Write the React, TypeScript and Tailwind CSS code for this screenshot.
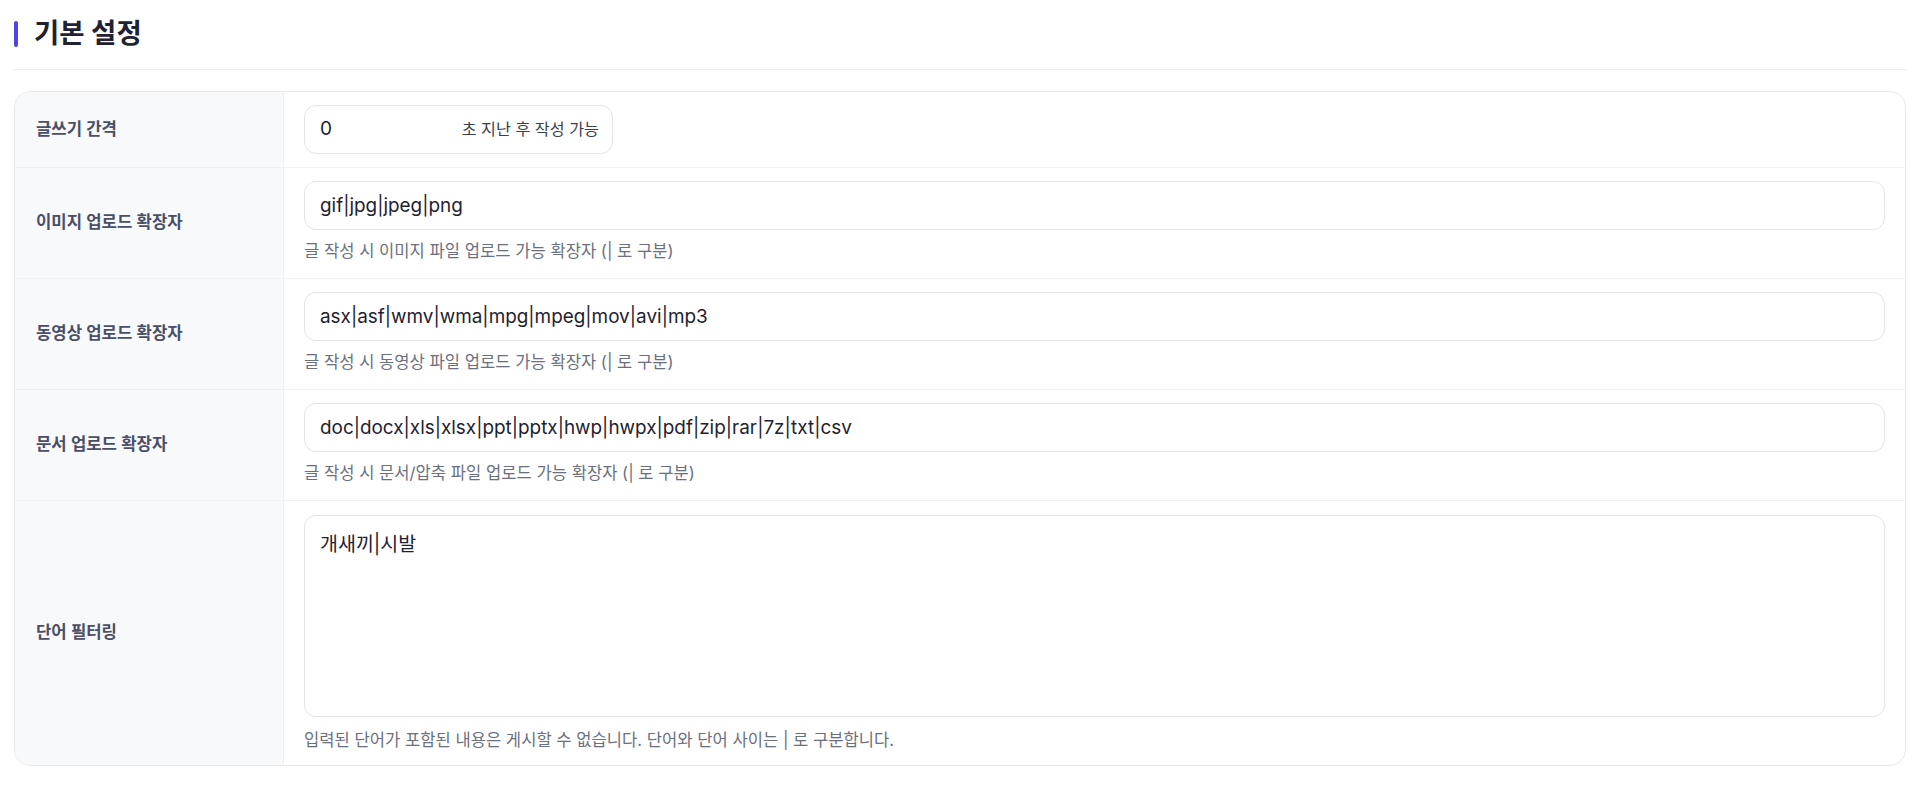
import { useState } from "react";

const font = { fontFamily: '"Inter", "Noto Sans CJK KR", sans-serif' };

const extRows = [
  {
    label: "이미지 업로드 확장자",
    value: "gif|jpg|jpeg|png",
    help: "글 작성 시 이미지 파일 업로드 가능 확장자 (| 로 구분)",
  },
  {
    label: "동영상 업로드 확장자",
    value: "asx|asf|wmv|wma|mpg|mpeg|mov|avi|mp3",
    help: "글 작성 시 동영상 파일 업로드 가능 확장자 (| 로 구분)",
  },
  {
    label: "문서 업로드 확장자",
    value: "doc|docx|xls|xlsx|ppt|pptx|hwp|hwpx|pdf|zip|rar|7z|txt|csv",
    help: "글 작성 시 문서/압축 파일 업로드 가능 확장자 (| 로 구분)",
  },
];

const Label = ({ children }: { children: React.ReactNode }) => (
  <div className="w-[269px] shrink-0 flex items-center pl-[21px] bg-[#f8f9fb] border-r border-[#f0f1f4] text-[16.7px] font-semibold text-[#4a4e66]">
    {children}
  </div>
);

export default function App() {
  const [interval, setInterval] = useState("0");
  const [exts, setExts] = useState(extRows.map((r) => r.value));
  const [words, setWords] = useState("개새끼|시발");

  return (
    <div className="min-h-screen bg-white px-[14px]" style={font}>
      {/* Header */}
      <div className="flex items-center gap-[16px] pt-[15px] pb-[17px] border-b border-[#eceef1]">
        <span className="w-[4px] h-[26px] rounded-full bg-[#4f46e5]" />
        <h2 className="text-[27.5px] leading-[37px] font-bold text-[#1e2233]">기본 설정</h2>
      </div>

      {/* Settings card */}
      <div className="mt-[21px] border border-[#e6e8ec] rounded-2xl overflow-hidden">
        {/* Posting interval */}
        <div className="flex border-b border-[#f0f1f4]">
          <Label>글쓰기 간격</Label>
          <div className="flex-1 px-5 py-[13px]">
            <div className="w-[309px] h-[49px] flex items-center border border-[#e2e4e9] rounded-xl pl-[15px] pr-[13px]">
              <input
                value={interval}
                onChange={(e) => setInterval(e.target.value)}
                className="flex-1 min-w-0 bg-transparent outline-none text-[19px] text-[#1f2230]"
              />
              <span className="text-[16.2px] text-[#3a3f4d] whitespace-nowrap">초 지난 후 작성 가능</span>
            </div>
          </div>
        </div>

        {/* Extension rows */}
        {extRows.map((row, i) => (
          <div key={row.label} className="flex border-b border-[#f0f1f4]">
            <Label>{row.label}</Label>
            <div className="flex-1 px-5 pt-[13px] pb-[16px]">
              <input
                value={exts[i]}
                onChange={(e) => setExts(exts.map((v, j) => (j === i ? e.target.value : v)))}
                className="w-full h-[49px] border border-[#e2e4e9] rounded-xl px-[15px] outline-none text-[18.9px] text-[#1f2230]"
              />
              <p className="mt-[10px] text-[16.6px] leading-[22px] text-[#6b7080]">{row.help}</p>
            </div>
          </div>
        ))}

        {/* Word filter */}
        <div className="flex">
          <Label>단어 필터링</Label>
          <div className="flex-1 px-5 pt-[14px] pb-[14px]">
            <textarea
              value={words}
              onChange={(e) => setWords(e.target.value)}
              className="block w-full h-[202px] resize-none border border-[#e2e4e9] rounded-xl px-[15px] py-[14px] outline-none text-[19.5px] leading-[28px] text-[#1f2230]"
            />
            <p className="mt-[12px] text-[16.6px] leading-[22px] text-[#6b7080]">
              입력된 단어가 포함된 내용은 게시할 수 없습니다. 단어와 단어 사이는 | 로 구분합니다.
            </p>
          </div>
        </div>
      </div>
    </div>
  );
}
